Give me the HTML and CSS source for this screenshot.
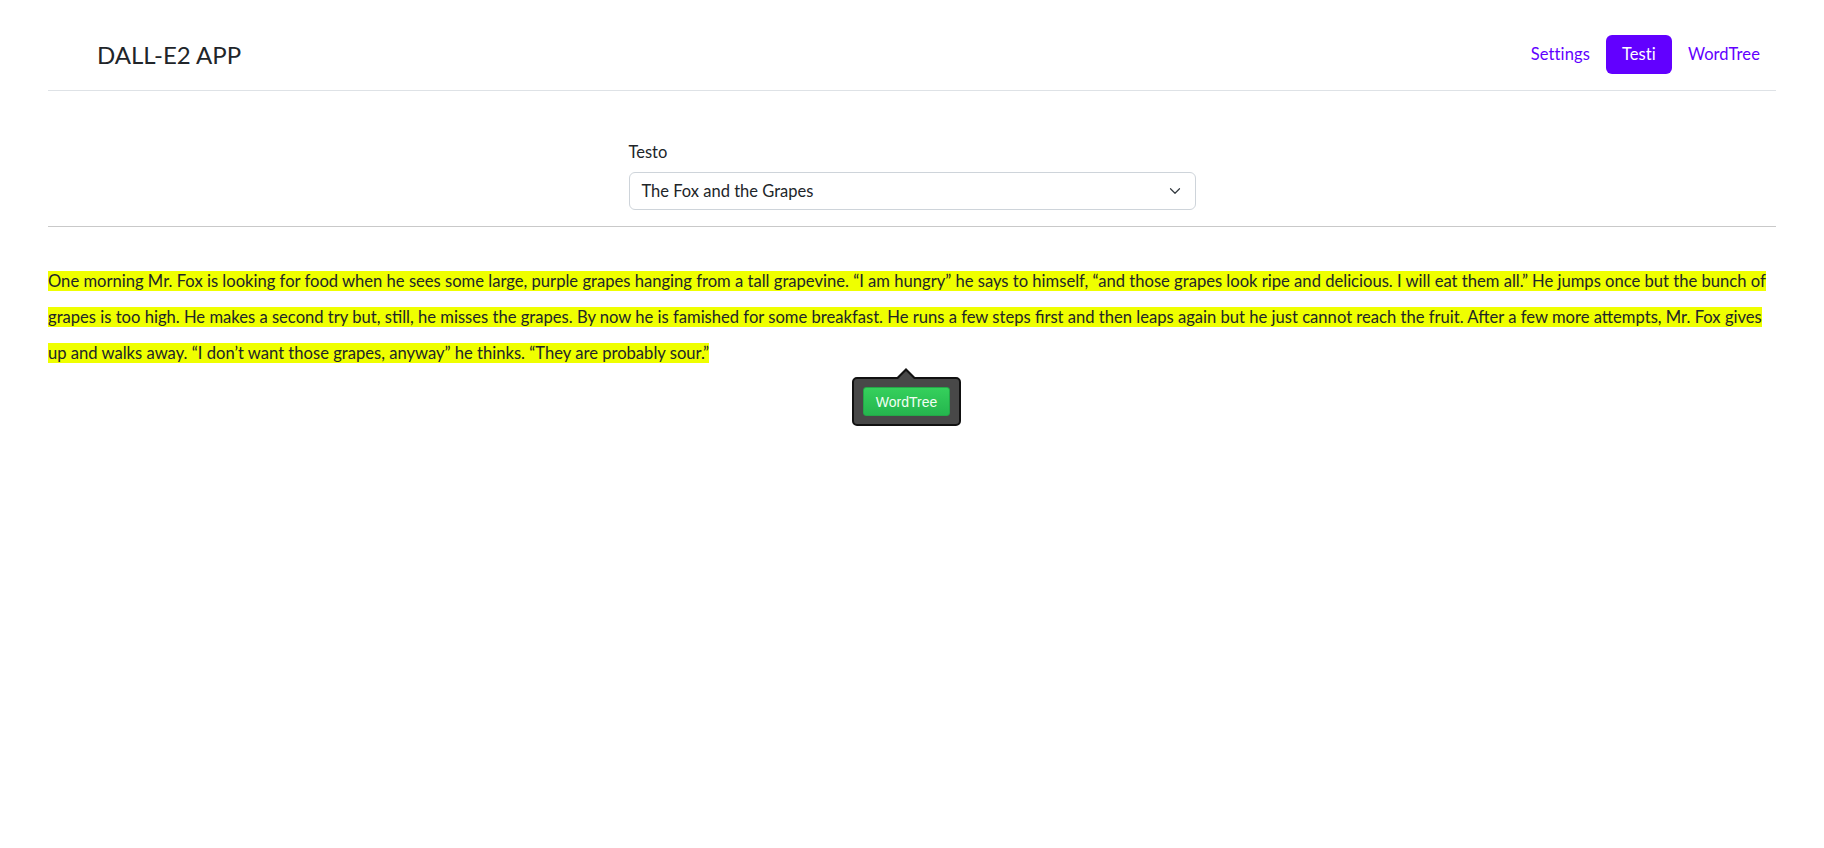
FILE: index.html
```html
<!DOCTYPE html>
<html lang="it">
<head>
<meta charset="utf-8">
<title>DALL-E2 APP</title>
<link rel="stylesheet" href="styles.css">
</head>
<body>
<header class="topbar">
  <div class="brand">DALL-E2 APP</div>
  <nav class="nav">
    <a class="nav-link" href="#">Settings</a>
    <a class="nav-link active" href="#">Testi</a>
    <a class="nav-link" href="#">WordTree</a>
  </nav>
</header>
<main class="page">
  <section class="picker">
    <div class="field">
      <label class="field-label">Testo</label>
      <div class="select">
        <span>The Fox and the Grapes</span>
        <svg class="chevron" width="16" height="12" viewBox="0 0 16 16"><path d="M2 5l6 6 6-6" fill="none" stroke="#343a40" stroke-width="1.6" stroke-linecap="round" stroke-linejoin="round"/></svg>
      </div>
    </div>
  </section>
  <hr class="divider">
  <section class="reader">
    <p class="story"><mark class="hl">One morning Mr. Fox is looking for food when he sees some large, purple grapes hanging from a tall grapevine. “I am hungry” he says to himself, “and those grapes look ripe and delicious. I will eat them all.” He jumps once but the bunch of<br>grapes is too high. He makes a second try but, still, he misses the grapes. By now he is famished for some breakfast. He runs a few steps first and then leaps again but he just cannot reach the fruit. After a few more attempts, Mr. Fox gives<br>up and walks away. “I don’t want those grapes, anyway” he thinks. “They are probably sour.”</mark></p>
    <div class="tip-bubble">
      <span class="tip-arrow"></span>
      <button class="btn-green" type="button">WordTree</button>
    </div>
  </section>
</main>
</body>
</html>
```

FILE: styles.css
```css
* { box-sizing: border-box; }
html, body { margin: 0; padding: 0; background: #fff; }
body {
  font-family: "Lato", "Liberation Sans", sans-serif;
  font-size: 16.5px;
  color: #212529;
  min-height: 848px;
}
.topbar {
  margin: 0 48px;
  padding: 35px 0 16px;
  border-bottom: 1px solid #dee2e6;
  display: flex;
  align-items: center;
  justify-content: space-between;
}
.brand {
  margin-left: 49px;
  font-size: 24px;
  line-height: 30px;
  color: #212529;
}
.nav { display: flex; align-items: center; }
.nav-link {
  display: block;
  padding: 8px 16px;
  line-height: 23px;
  letter-spacing: 0.1px;
  color: #6200ff;
  text-decoration: none;
  border-radius: 6px;
}
.nav-link.active { background: #6200ff; color: #fff; }
.page { margin: 0 48px; }
.picker {
  padding-top: 49px;
  display: flex;
  justify-content: center;
}
.field { width: 567px; }
.field-label {
  display: block;
  line-height: 24px;
  margin-bottom: 8px;
}
.select {
  height: 38px;
  border: 1px solid #ced4da;
  border-radius: 6px;
  padding: 0 12px;
  display: flex;
  align-items: center;
  justify-content: space-between;
  line-height: 24px;
}
.chevron { width: 16px; height: 12px; }
.divider {
  margin: 16px 0 0;
  border: 0;
  border-top: 1px solid #c9c9c9;
  height: 0;
}
.reader {
  position: relative;
  padding-top: 36px;
  padding-bottom: 120px;
}
.story { margin: 0; line-height: 36px; font-size: 16.6px; }
.hl { background: #efff00; color: #212529; }
.tip-bubble {
  position: absolute;
  left: 804px;
  top: 150px;
  width: 109px;
  height: 49px;
  background-color: #484848;
  border: 2px solid #111111;
  border-radius: 5px;
  padding: 8px 9px;
  z-index: 2;
}
.tip-arrow {
  position: absolute;
  left: 42px;
  top: -11px;
  width: 0;
  height: 0;
  border-left: 10px solid transparent;
  border-right: 10px solid transparent;
  border-bottom: 10px solid #111;
}
.tip-arrow::after {
  content: "";
  position: absolute;
  left: -8px;
  top: 3px;
  width: 0;
  height: 0;
  border-left: 8px solid transparent;
  border-right: 8px solid transparent;
  border-bottom: 8px solid #484848;
}
.btn-green {
  display: block;
  width: 87px;
  height: 29px;
  padding: 0;
  border: 1px solid #23a847;
  border-radius: 3px;
  background: linear-gradient(#35d05c, #25b64e);
  color: #f2fff4;
  font-family: "Liberation Sans", Arial, sans-serif;
  font-size: 14px;
}
```
